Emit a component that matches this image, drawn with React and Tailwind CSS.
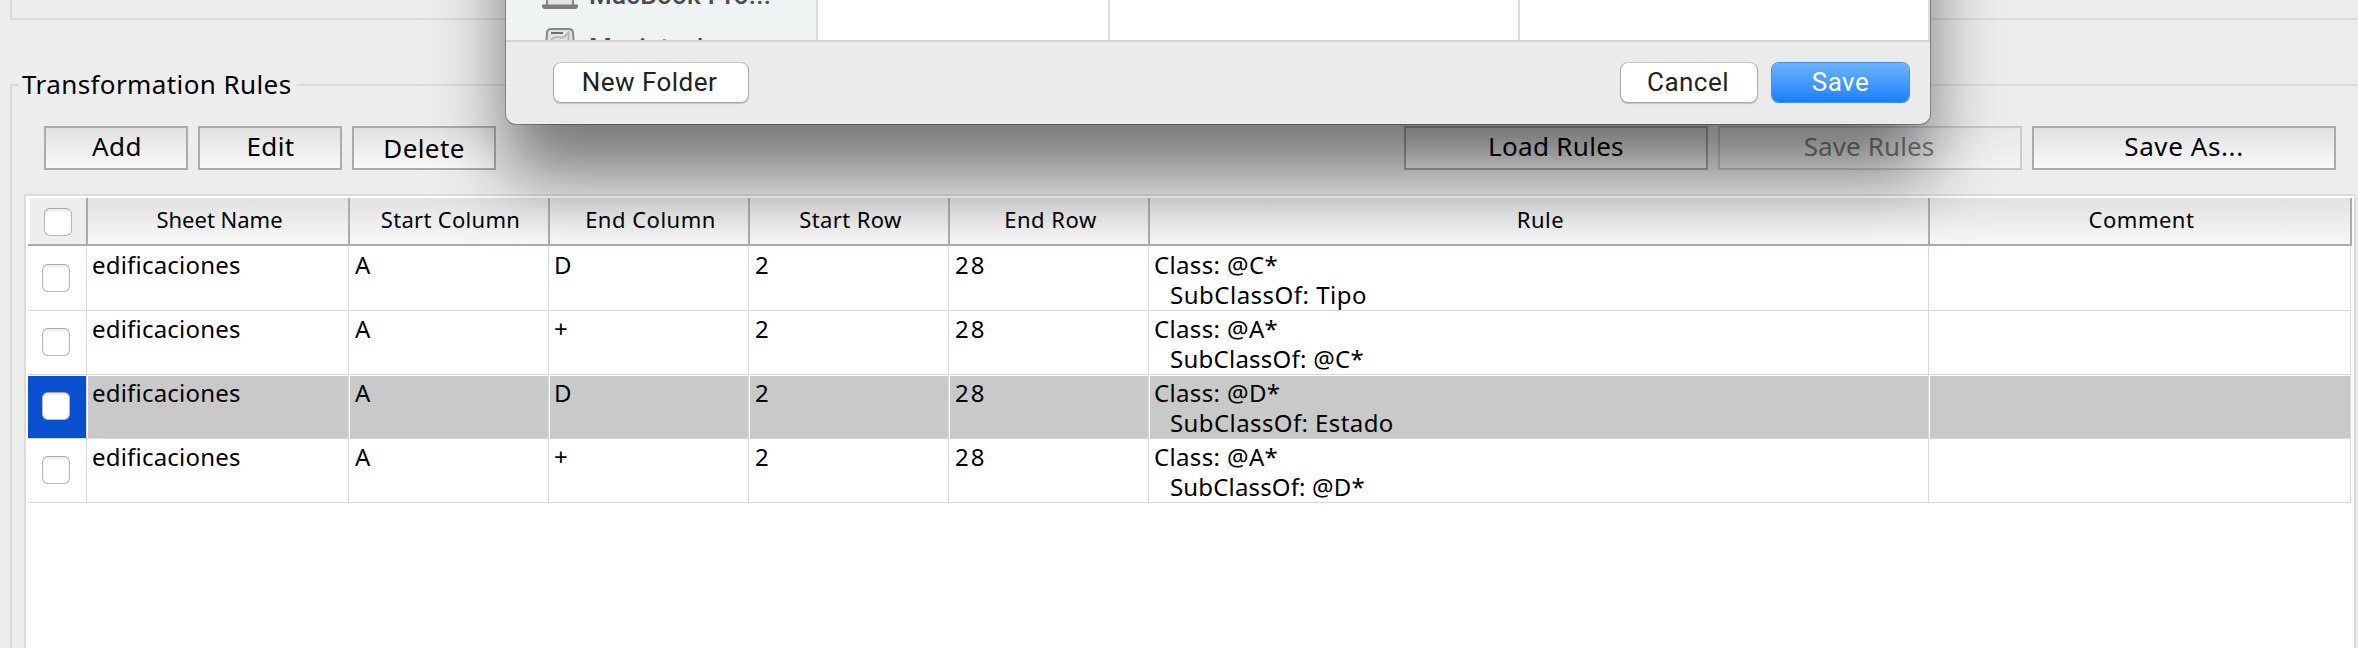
import React from "react";

const COLUMNS = [
  { label: "Sheet Name", tracking: "tracking-[0px]" },
  { label: "Start Column", tracking: "tracking-[0.3px]" },
  { label: "End Column", tracking: "tracking-[0.5px]" },
  { label: "Start Row", tracking: "tracking-[0.4px]" },
  { label: "End Row", tracking: "tracking-[0.5px]" },
  { label: "Rule", tracking: "tracking-[0.5px]" },
  { label: "Comment", tracking: "tracking-[0.5px]" },
];

const ROWS = [
  { endColumn: "D", subject: "@C*", parent: "Tipo", tracking: "tracking-[0.5px]" },
  { endColumn: "+", subject: "@A*", parent: "@C*", tracking: "tracking-[0.25px]" },
  { endColumn: "D", subject: "@D*", parent: "Estado", tracking: "tracking-[0.4px]", selected: true },
  { endColumn: "+", subject: "@A*", parent: "@D*", tracking: "tracking-[0.15px]" },
];

function Checkbox() {
  return (
    <span className="block h-7 w-7 shrink-0 rounded-[6px] border border-[#b9b9b9] border-t-[#a6a6a6] bg-white shadow-[inset_0_2px_2px_rgba(0,0,0,0.09)]" />
  );
}

function SwingButton({ children, className = "" }) {
  return (
    <button
      className={`flex h-[44px] items-center justify-center border-2 border-[#ababab] bg-linear-to-b from-[#e1e1e1] to-[#f9f9f9] text-[26px] leading-[30px] whitespace-nowrap ${className}`}
    >
      {children}
    </button>
  );
}

function Toolbar() {
  return (
    <div className="flex w-[2292px] justify-between">
      <div className="flex gap-[10px]">
        <SwingButton className="w-36 pb-1 pl-[2px] tracking-[0.4px]">Add</SwingButton>
        <SwingButton className="w-36 pb-1 pl-px tracking-[0.4px]">Edit</SwingButton>
        <SwingButton className="w-36 tracking-[0.4px]">Delete</SwingButton>
      </div>
      <div className="flex gap-[10px]">
        <SwingButton className="w-[304px] pb-1 tracking-[0.3px]">Load Rules</SwingButton>
        <SwingButton className="w-[304px] border-[#cbcbcb]! from-[#e9e9e9]! to-[#f3f3f3]! pr-[2px] pb-1 tracking-[0.1px] text-[#808080]">
          Save Rules
        </SwingButton>
        <SwingButton className="w-[304px] pb-1 tracking-[0.6px]">Save As...</SwingButton>
      </div>
    </div>
  );
}

function Cell({ selected, children, className = "" }) {
  return (
    <div className="flex border-r border-b border-[#d9d9d9] bg-white">
      <div className={`mt-px ml-px flex-1 pt-[2px] pl-1 ${selected ? "bg-[#c9c9c9]" : ""} ${className}`}>
        {children}
      </div>
    </div>
  );
}

function RuleRow({ row }) {
  const s = row.selected;
  return (
    <div className="grid h-16 grid-cols-[59px_262px_200px_200px_200px_200px_780px_422px] text-[24px] leading-[30px] whitespace-nowrap">
      <div className="flex border-r border-b border-[#d9d9d9]">
        <div className={`mt-px flex flex-1 items-center justify-center pr-[2px] pb-[2px] ${s ? "bg-[#0950d0]" : ""}`}>
          <Checkbox />
        </div>
      </div>
      <Cell selected={s} className="tracking-[0.2px]">edificaciones</Cell>
      <Cell selected={s} className="pl-[5px]">A</Cell>
      <Cell selected={s}>{row.endColumn}</Cell>
      <Cell selected={s} className="pl-[5px]">2</Cell>
      <Cell selected={s} className="pl-[5px] tracking-[2px]">28</Cell>
      <Cell selected={s}>
        <div className="tracking-[0.35px]">Class: {row.subject}</div>
        <div className={`pl-4 ${row.tracking}`}>SubClassOf: {row.parent}</div>
      </Cell>
      <Cell selected={s} />
    </div>
  );
}

function RulesTable() {
  return (
    <div className="w-[2332px] flex-none border-2 border-b-0 border-[#dcdcdc] bg-white pt-[2px] pl-[2px]">
      <div className="mb-px grid h-12 w-[2324px] grid-cols-[60px_262px_200px_200px_200px_200px_780px_422px] border-b-2 border-[#ababab] text-[22px] leading-[28px] whitespace-nowrap">
        <div className="flex border-r-2 border-[#ababab] bg-white pl-[2px]">
          <div className="flex flex-1 items-center justify-center bg-[#eeeeee] pt-[2px]">
            <Checkbox />
          </div>
        </div>
        {COLUMNS.map((c) => (
          <div
            key={c.label}
            className={`flex items-center justify-center border-r-2 border-[#ababab] bg-linear-to-b from-[#e1e1e1] to-[#f8f8f8] pb-[5px] pl-[3px] ${c.tracking}`}
          >
            {c.label}
          </div>
        ))}
      </div>
      {ROWS.map((row, i) => (
        <RuleRow key={i} row={row} />
      ))}
    </div>
  );
}

function LaptopIcon() {
  return (
    <svg width="36" height="28" viewBox="0 0 36 28" className="shrink-0">
      <path d="M5 23V5a3 3 0 0 1 3-3h20a3 3 0 0 1 3 3v18" fill="#dfe3e4" stroke="#858788" strokeWidth="2" />
      <path d="M0 22.500h36v1.500a3 3 0 0 1-3 3H3a3 3 0 0 1-3-3z" fill="#7a7c7d" />
    </svg>
  );
}

function DiskIcon() {
  return (
    <svg width="30" height="34" viewBox="0 0 30 34" className="shrink-0">
      <path d="M1 33V18L2 5Q2.300 1 6 1h18q3.700 0 4 4l1 13v15z" fill="#e3e5e5" stroke="#858788" strokeWidth="2" />
      <path d="M6 5h12" stroke="#6f7172" strokeWidth="2" />
      <path d="M6 12q4-4 9-2.500 4 1 8.500-5V14" fill="none" stroke="#b5b8b8" strokeWidth="2" />
    </svg>
  );
}

function SaveDialog() {
  return (
    <div className="absolute top-[-200px] left-[506px] flex h-[324px] w-[1424px] flex-col overflow-hidden rounded-[10px] bg-[#ebebeb] font-[Roboto,sans-serif] text-[26px] tracking-[0.45px] text-[#222222] shadow-[0_0_0_1px_rgba(0,0,0,0.28),0_50px_70px_rgba(0,0,0,0.5)]">
      <div className="flex h-[242px] shrink-0 overflow-hidden border-b-2 border-[#d3d3d3] bg-white">
        <div className="flex w-[312px] flex-col overflow-hidden border-r-2 border-[#dadddf] bg-[#f0f3f3] pt-[170px] font-medium text-[#4a4c4d]">
          <div className="flex h-[52px] shrink-0 items-center pl-9">
            <LaptopIcon />
            <span className="mb-[2px] ml-[11px] leading-[30px] tracking-[0.3px]">MacBook Pro...</span>
          </div>
          <div className="flex h-[52px] shrink-0 items-start pt-[6px] pl-[39px]">
            <DiskIcon />
            <span className="mt-[5px] ml-[14px] leading-[30px] tracking-[0px]">Macintosh</span>
          </div>
        </div>
        <div className="w-[292px] border-r-2 border-[#dedede]" />
        <div className="w-[410px] border-r-2 border-[#dedede]" />
        <div className="flex-1 border-r-2 border-[#dedede]" />
      </div>
      <div className="flex pt-[21px] pr-[21px] pl-[48px]">
        <button className="h-[39px] w-[194px] rounded-[7px] bg-white pr-[3px] leading-[39px] shadow-[0_0_0_1px_rgba(0,0,0,0.14),0_1px_1px_1px_rgba(0,0,0,0.16)]">
          New Folder
        </button>
        <button className="ml-auto h-[39px] w-[136px] rounded-[7px] bg-white pr-[2px] leading-[39px] shadow-[0_0_0_1px_rgba(0,0,0,0.14),0_1px_1px_1px_rgba(0,0,0,0.16)]">
          Cancel
        </button>
        <button className="ml-[15px] h-[39px] w-[137px] rounded-[7px] bg-linear-to-b from-[#6cb3fa] to-[#167efb] leading-[39px] text-white shadow-[0_0_0_1px_#3c8ff5,0_1px_1px_rgba(0,0,0,0.25)]">
          Save
        </button>
      </div>
    </div>
  );
}

export default function App() {
  return (
    <div className="relative flex h-[648px] w-[2358px] flex-col overflow-hidden bg-[#ededed] font-['Noto_Sans',sans-serif] text-black">
      <div className="ml-[10px] h-5 shrink-0 border-b-2 border-l-2 border-[#dbdbdb]" />
      <fieldset className="mt-[52px] ml-[10px] h-[600px] w-[2400px] shrink-0 border-2 border-[#dbdbdb]">
        <legend className="ml-[6px] h-[26px] pr-[5px] pl-1 text-[26px] leading-6 tracking-[0.4px] whitespace-nowrap">
          Transformation Rules
        </legend>
        <div className="flex h-[570px] flex-col pt-7">
          <div className="pb-6 pl-8">
            <Toolbar />
          </div>
          <div className="flex flex-1 pl-3">
            <RulesTable />
          </div>
        </div>
      </fieldset>
      <SaveDialog />
    </div>
  );
}
